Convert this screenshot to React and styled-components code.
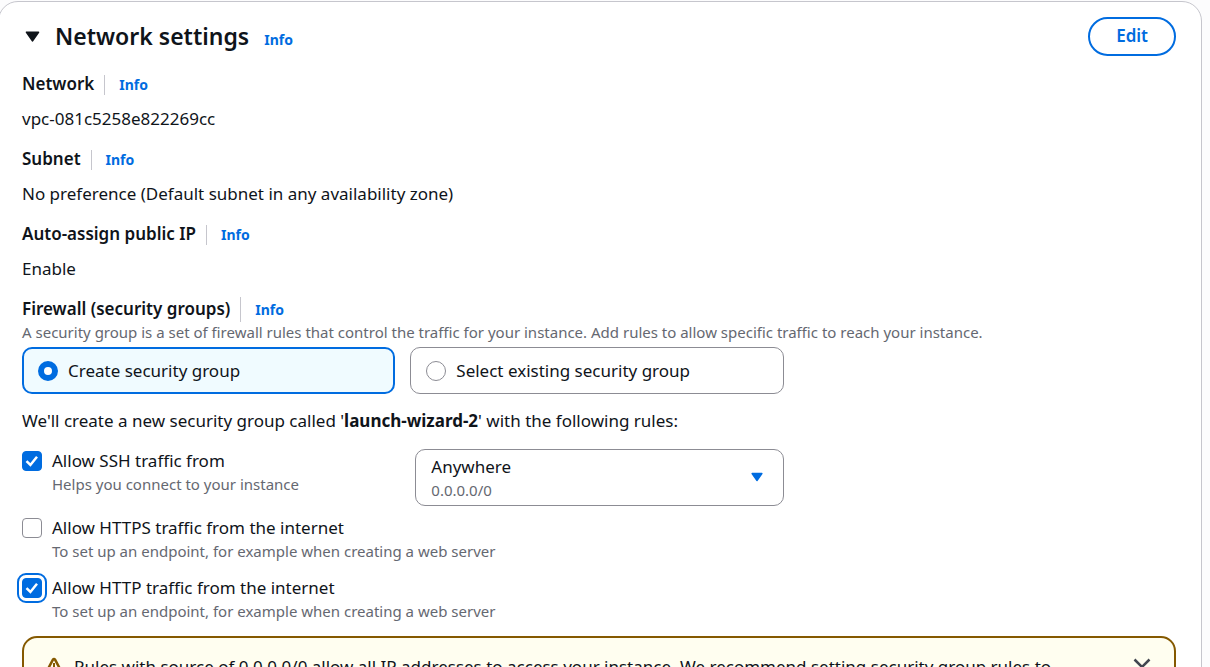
import React from "react";
import styled, { createGlobalStyle, css } from "styled-components";

const GlobalStyle = createGlobalStyle`
  *, *::before, *::after { box-sizing: border-box; }
  body {
    margin: 0;
    background: #fcfcfd;
    color: #0f141a;
    font-family: "Noto Sans", "Open Sans", sans-serif;
    font-size: 17px;
    line-height: 23px;
  }
  input, select, button { font: inherit; color: inherit; margin: 0; }
`;

const Page = styled.main`
  height: 100vh;
  overflow: hidden;
  padding: 1px 8px 0 0;
`;

const Panel = styled.section`
  margin-left: -2px;
  padding: 15px 25px 24px 23px;
  border: 1px solid #c6c6cd;
  border-radius: 20px;
  background: #fff;
`;

const Header = styled.header`
  display: flex;
  align-items: center;
  justify-content: space-between;
  margin-bottom: 16px;
`;

const TitleGroup = styled.div`
  display: flex;
  align-items: center;
  gap: 15px;
`;

const Title = styled.h2`
  margin: 0;
  padding-bottom: 2px;
  font-size: 23px;
  line-height: 30px;
  font-weight: 600;
`;

const Toggle = styled.button`
  display: flex;
  align-items: center;
  gap: 14px;
  padding: 0 0 0 2px;
  border: 0;
  background: none;
  cursor: pointer;
`;

const InfoLink = styled.a`
  color: #006ce0;
  font-size: 14px;
  font-weight: 700;
  text-decoration: none;
`;

const TitleInfo = styled(InfoLink)`
  padding-top: 6px;
`;

const EditButton = styled.button`
  padding: 5px 26px 6px;
  border: 2px solid #006ce0;
  border-radius: 20px;
  background: #fff;
  color: #006ce0;
  font-weight: 600;
  line-height: 24px;
  cursor: pointer;
`;

const Fields = styled.dl`
  display: flex;
  flex-direction: column;
  gap: 17px;
  margin: 0 0 17px;
`;

const Field = styled.div`
  display: flex;
  flex-direction: column;
  gap: 10px;
`;

const LabelRow = styled.div`
  display: flex;
  align-items: center;
  min-height: 25px;
`;

const LabelText = styled.span`
  padding-bottom: 2px;
  font-weight: 600;
`;

const Separator = styled.span`
  width: 1px;
  height: ${(p) => (p.$tall ? "25px" : "20px")};
  margin: 0 14px 0 10px;
  background: #c6c6cd;
`;

const Value = styled.dd`
  margin: 0;
`;

const Hint = styled.p`
  margin: 0;
  color: #656871;
  font-size: 15px;
  line-height: 20px;
`;

const Controls = styled.div`
  width: 66%;
`;

const Tiles = styled.div`
  display: grid;
  grid-template-columns: 1fr 1fr;
  gap: 15px;
  margin: 5px 0 15px;
`;

const Tile = styled.label`
  display: flex;
  align-items: center;
  gap: 10px;
  height: 47px;
  padding: 0 15px;
  border: 1px solid #8c8c94;
  border-radius: 10px;
  cursor: pointer;

  &:has(input:checked) {
    padding: 0 14px;
    border: 2px solid #006ce0;
    background: #f0fbff;
  }
`;

const Radio = styled.input.attrs({ type: "radio" })`
  appearance: none;
  width: 20px;
  height: 20px;
  border: 1px solid #8c8c94;
  border-radius: 50%;
  background: #fff;

  &:checked {
    border: 6px solid #006ce0;
  }
`;

const Note = styled.p`
  margin: 0 0 17px;
`;

const Rules = styled.div`
  display: flex;
  flex-direction: column;
  gap: 15px;
  margin-bottom: 15px;
`;

const SourceRow = styled.div`
  display: grid;
  grid-template-columns: 1fr 1fr;
  gap: 25px;
  margin-bottom: 10px;
`;

const Rule = styled.div`
  display: flex;
  align-items: flex-start;
  gap: 10px;
`;

const RuleText = styled.div`
  flex: 1;
`;

const RuleLabel = styled.label`
  display: block;
  margin-bottom: 2px;
`;

const CheckFrame = styled.span`
  display: grid;
  margin-top: 2px;

  > * { grid-area: 1 / 1; }
  > svg { pointer-events: none; }
`;

const CheckInput = styled.input.attrs({ type: "checkbox" })`
  appearance: none;
  width: 20px;
  height: 20px;
  border: 1px solid #8c8c94;
  border-radius: 4px;
  background: #fff;

  &:checked {
    border-color: #006ce0;
    background: #006ce0;
  }

  &:not(:checked) + svg { visibility: hidden; }

  ${(p) =>
    p.$ring &&
    css`
      outline: 2px solid #006ce0;
      outline-offset: 3px;
    `}
`;

const SelectBox = styled.div`
  position: relative;
  height: 57px;

  > svg {
    position: absolute;
    right: 20px;
    top: 21px;
    pointer-events: none;
  }
`;

const Select = styled.select`
  appearance: none;
  width: 100%;
  height: 100%;
  padding: 0 45px 22px 15px;
  border: 1px solid #8c8c94;
  border-radius: 10px;
  background: #fff;
`;

const SelectHint = styled(Hint)`
  position: absolute;
  left: 16px;
  bottom: 6px;
  pointer-events: none;
`;

const Alert = styled.div`
  display: flex;
  align-items: flex-start;
  gap: 10px;
  padding: 17px 22px 15px 20px;
  border: 2px solid #855900;
  border-radius: 15px;
  background: #fffef0;
`;

const AlertText = styled.p`
  flex: 1;
  margin: 0;
  padding-right: 60px;
`;

const Dismiss = styled.button`
  display: flex;
  padding: 2px 0;
  border: 0;
  background: none;
  color: #424650;
`;

const Caret = ({ size, color }) => (
  <svg width={size} height={size} viewBox="0 0 20 20" aria-hidden="true">
    <path d="M3 5h14l-7 10z" fill={color} stroke={color} strokeWidth="2" strokeLinejoin="round" />
  </svg>
);

const Tick = () => (
  <svg width="20" height="20" viewBox="0 0 20 20" aria-hidden="true">
    <path d="M4.5 10.2 8.4 14 15 5.8" fill="none" stroke="#fff" strokeWidth="2.5" />
  </svg>
);

const WarningIcon = () => (
  <svg width="20" height="24" viewBox="0 0 20 24" fill="none" stroke="#855900" strokeWidth="2.5" aria-hidden="true">
    <path d="M8.800 4.800Q10 3.200 11.200 4.800L18.400 18.500H1.600z" strokeLinejoin="round" />
    <path d="M10 8v5.500M10 15v2" strokeWidth="2" />
  </svg>
);

const CloseIcon = () => (
  <svg width="20" height="20" viewBox="0 0 20 20" fill="none" stroke="currentColor" strokeWidth="2.5" aria-hidden="true">
    <path d="M2.5 2.5l15 15M17.5 2.5l-15 15" />
  </svg>
);

function Label({ children, tall, as }) {
  return (
    <LabelRow as={as}>
      <LabelText>{children}</LabelText>
      <Separator $tall={tall} />
      <InfoLink href="#info">Info</InfoLink>
    </LabelRow>
  );
}

function RuleOption({ id, label, hint, checked, ring }) {
  return (
    <Rule>
      <CheckFrame>
        <CheckInput id={id} defaultChecked={checked} $ring={ring} />
        <Tick />
      </CheckFrame>
      <RuleText>
        <RuleLabel htmlFor={id}>{label}</RuleLabel>
        <Hint>{hint}</Hint>
      </RuleText>
    </Rule>
  );
}

const fields = [
  ["Network", "vpc-081c5258e822269cc"],
  ["Subnet", "No preference (Default subnet in any availability zone)"],
  ["Auto-assign public IP", "Enable"],
];

const endpointHint = "To set up an endpoint, for example when creating a web server";

export default function App() {
  return (
    <Page>
      <GlobalStyle />
      <Panel>
        <Header>
          <TitleGroup>
            <Toggle aria-expanded="true">
              <Caret size={17} color="#0f141a" />
              <Title as="span">Network settings</Title>
            </Toggle>
            <TitleInfo href="#info">Info</TitleInfo>
          </TitleGroup>
          <EditButton>Edit</EditButton>
        </Header>

        <Fields>
          {fields.map(([name, value]) => (
            <Field key={name}>
              <Label as="dt">{name}</Label>
              <Value>{value}</Value>
            </Field>
          ))}
        </Fields>

        <Label tall>Firewall (security groups)</Label>
        <Hint>
          A security group is a set of firewall rules that control the traffic for your instance. Add
          rules to allow specific traffic to reach your instance.
        </Hint>

        <Controls>
          <Tiles>
            <Tile>
              <Radio name="group" defaultChecked />
              Create security group
            </Tile>
            <Tile>
              <Radio name="group" />
              Select existing security group
            </Tile>
          </Tiles>
          <Note>
            We'll create a new security group called '<b>launch-wizard-2</b>' with the following rules:
          </Note>
          <SourceRow>
            <RuleOption id="ssh" label="Allow SSH traffic from" hint="Helps you connect to your instance" checked />
            <SelectBox>
              <Select aria-label="SSH traffic source">
                <option>Anywhere</option>
              </Select>
              <SelectHint as="span">0.0.0.0/0</SelectHint>
              <Caret size={14} color="#006ce0" />
            </SelectBox>
          </SourceRow>
          <Rules>
            <RuleOption id="https" label="Allow HTTPS traffic from the internet" hint={endpointHint} />
            <RuleOption id="http" label="Allow HTTP traffic from the internet" hint={endpointHint} checked ring />
          </Rules>
        </Controls>

        <Alert role="status">
          <WarningIcon />
          <AlertText>
            Rules with source of 0.0.0.0/0 allow all IP addresses to access your instance. We recommend
            setting security group rules to
          </AlertText>
          <Dismiss aria-label="Dismiss">
            <CloseIcon />
          </Dismiss>
        </Alert>
      </Panel>
    </Page>
  );
}
